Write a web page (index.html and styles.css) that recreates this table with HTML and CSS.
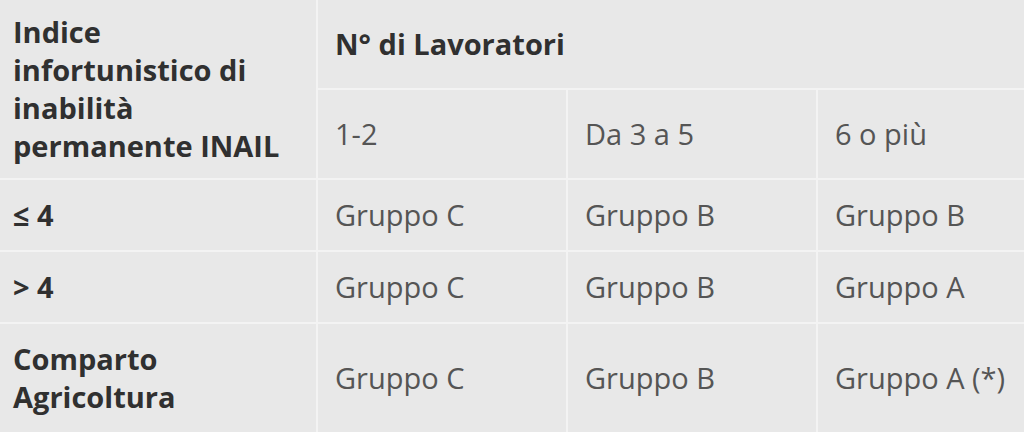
FILE: index.html
```html
<!DOCTYPE html>
<html lang="it">
<head>
<meta charset="utf-8">
<link rel="stylesheet" href="styles.css">
</head>
<body>
<table class="grid">
  <tr>
    <th class="label tall" rowspan="2">Indice<br>infortunistico di<br>inabilità<br>permanente INAIL</th>
    <th class="head" colspan="3">N° di Lavoratori</th>
  </tr>
  <tr>
    <td>1-2</td>
    <td>Da 3 a 5</td>
    <td>6 o più</td>
  </tr>
  <tr>
    <th class="label">≤ 4</th>
    <td>Gruppo C</td>
    <td>Gruppo B</td>
    <td>Gruppo B</td>
  </tr>
  <tr>
    <th class="label">&gt; 4</th>
    <td>Gruppo C</td>
    <td>Gruppo B</td>
    <td>Gruppo A</td>
  </tr>
  <tr>
    <th class="label">Comparto<br>Agricoltura</th>
    <td>Gruppo C</td>
    <td>Gruppo B</td>
    <td>Gruppo A (*)</td>
  </tr>
</table>
</body>
</html>
```

FILE: styles.css
```css
html, body {
  margin: 0;
  padding: 0;
  background: #e8e8e8;
}
body {
  overflow: hidden;
  font-family: "Open Sans", "Noto Sans", sans-serif;
}
.grid {
  border-collapse: collapse;
  table-layout: fixed;
  width: 1068px;
  font-size: 29px;
  line-height: 38px;
}
.grid th, .grid td {
  border: 2px solid #f3f3f3;
  padding: 16px 17px;
  text-align: left;
  vertical-align: middle;
}
.grid tr:first-child th, .grid tr:first-child td { border-top: none; }
.grid th.label {
  width: 286px;
  padding-left: 13px;
  border-left: none;
}
.grid th.tall {
  padding-top: 13px;
  padding-bottom: 13px;
}
.grid th {
  font-weight: 700;
  color: #303030;
}
.grid td {
  font-weight: 400;
  color: #555;
}
```
